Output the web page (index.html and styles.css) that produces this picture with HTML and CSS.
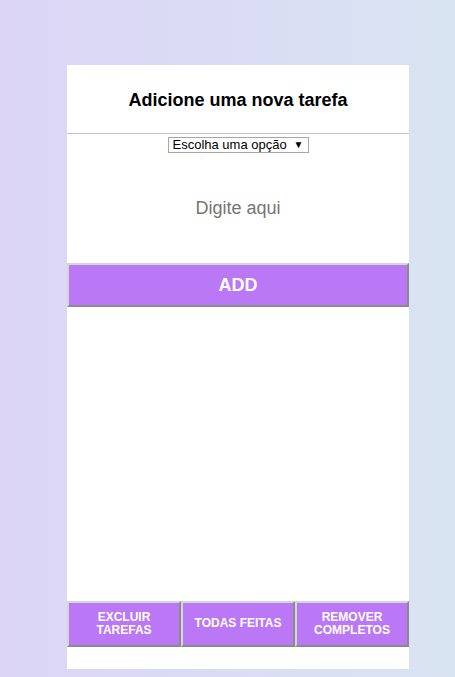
FILE: index.html
```html
<!DOCTYPE html>
<html lang="pt">
<head>
<meta charset="utf-8">
<title>Tarefas</title>
<link rel="stylesheet" href="styles.css">
</head>
<body>
<main class="app">
  <header class="app-header">
    <h1 class="title">Adicione uma nova tarefa</h1>
  </header>
  <div class="select-row">
    <span class="select-wrap">
      <select class="select">
        <option>Escolha uma opção</option>
      </select>
      <span class="select-arrow">▼</span>
    </span>
  </div>
  <input class="task-input" type="text" placeholder="Digite aqui">
  <button class="btn btn-add">ADD</button>
  <ul class="task-list"></ul>
  <div class="actions">
    <button class="btn btn-action">EXCLUIR<br>TAREFAS</button>
    <button class="btn btn-action">TODAS FEITAS</button>
    <button class="btn btn-action">REMOVER<br>COMPLETOS</button>
  </div>
  <div class="footer-space"></div>
</main>
</body>
</html>
```

FILE: styles.css
```css
* { box-sizing: border-box; }
html, body { height: 100%; }
body {
  margin: 0;
  background: linear-gradient(to right, #dcd5f6, #d9e4f2);
  font-family: "Liberation Sans", Arial, sans-serif;
}
.app {
  width: 342px;
  margin: 65px 0 0 67px;
  background: #fff;
  display: flex;
  flex-direction: column;
}
.app-header {
  height: 69px;
  border-bottom: 1px solid #c4c4c4;
  display: flex;
  align-items: center;
  justify-content: center;
}
.title {
  margin: 0;
  font-size: 18px;
  font-weight: bold;
  color: #000;
  padding-top: 2px;
}
.select-row {
  display: flex;
  justify-content: center;
  padding-top: 3px;
  height: 19px;
}
.select-wrap {
  position: relative;
  display: flex;
}
.select {
  appearance: none;
  -webkit-appearance: none;
  font-family: "Liberation Sans", Arial, sans-serif;
  font-size: 13px;
  color: #000;
  background: #fff;
  border: 1px solid #a6a6a6;
  border-radius: 0;
  height: 16px;
  line-height: 14px;
  padding: 0 18px 0 4px;
  width: 141px;
  margin: 0;
}
.select-arrow {
  position: absolute;
  right: 5px;
  top: 1px;
  font-size: 10px;
  line-height: 14px;
  color: #000;
  pointer-events: none;
}
.task-input {
  display: block;
  width: 100%;
  height: 110px;
  border: none;
  outline: none;
  text-align: center;
  font-family: "Liberation Sans", Arial, sans-serif;
  font-size: 18px;
  padding: 0;
  margin: 0;
}
.task-input::placeholder { color: #757575; }
.btn {
  margin: 0;
  background: #ba78f6;
  color: #fff;
  font-family: "Liberation Sans", Arial, sans-serif;
  font-weight: bold;
  border-style: solid;
  border-width: 2px;
  border-color: #d6d6d6 #8a8a8a #8a8a8a #d6d6d6;
  border-radius: 0;
  cursor: pointer;
}
.btn-add {
  display: block;
  width: 100%;
  height: 44px;
  font-size: 18px;
}
.task-list {
  list-style: none;
  margin: 0;
  padding: 0;
  height: 294px;
}
.actions {
  display: grid;
  grid-template-columns: repeat(3, 1fr);
}
.btn-action {
  height: 46px;
  font-size: 12px;
  line-height: 13.5px;
  padding: 0 4px;
}
.footer-space { height: 22px; }
```
